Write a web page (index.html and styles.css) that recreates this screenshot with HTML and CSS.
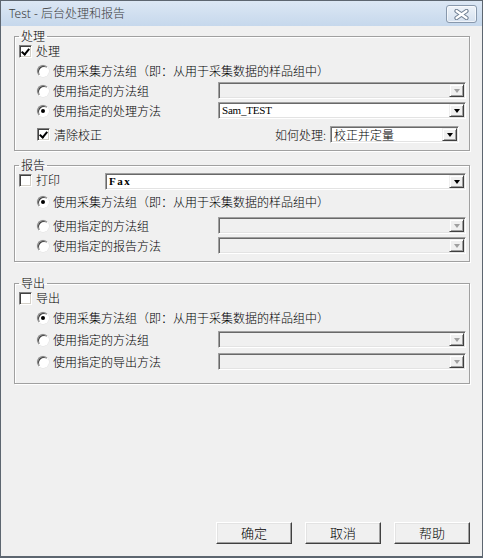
FILE: index.html
```html
<!DOCTYPE html>
<html lang="zh-CN">
<head>
    <meta charset="UTF-8">
    <title>Test - 后台处理和报告</title>
    <link rel="stylesheet" href="styles.css">
</head>
<body>

<div class="window">
    <div class="titlebar">
        <span class="title">Test - 后台处理和报告</span>
        <span class="close-btn">
            <svg width="17" height="11" viewBox="0 0 17 11">
                <path d="M3.5 2 L13.5 9 M13.5 2 L3.5 9" stroke="#6f7f92" stroke-width="4.2" stroke-linecap="round"/>
                <path d="M3.5 2 L13.5 9 M13.5 2 L3.5 9" stroke="#ffffff" stroke-width="2.2" stroke-linecap="round"/>
            </svg>
        </span>
    </div>

    <div class="client">
        <!-- 处理 -->
        <fieldset class="group group-process">
            <legend>处理</legend>
            <div class="row row-check">
                <span class="check checked"></span><span class="label">处理</span>
            </div>
            <div class="row row-radio gap-4">
                <span class="radio"></span><span class="label">使用采集方法组（即：从用于采集数据的样品组中）</span>
            </div>
            <div class="row row-radio row-combo gap-1">
                <span class="radio"></span><span class="label">使用指定的方法组</span>
                <div class="combo disabled"><span class="combo-text"></span><span class="drop"></span></div>
            </div>
            <div class="row row-radio row-combo gap-1">
                <span class="radio selected"></span><span class="label">使用指定的处理方法</span>
                <div class="combo"><span class="combo-text latin">Sam_TEST</span><span class="drop"></span></div>
            </div>
            <div class="row row-radio row-combo gap-5">
                <span class="check checked"></span><span class="label">清除校正</span>
                <span class="label how-label">如何处理:</span>
                <div class="combo combo-how"><span class="combo-text">校正并定量</span><span class="drop"></span></div>
            </div>
        </fieldset>

        <!-- 报告 -->
        <fieldset class="group group-report">
            <legend>报告</legend>
            <div class="row row-check row-print">
                <span class="check"></span><span class="label">打印</span>
                <div class="combo combo-fax"><span class="combo-text latin bold">Fax</span><span class="drop"></span></div>
            </div>
            <div class="row row-radio gap-3">
                <span class="radio selected"></span><span class="label">使用采集方法组（即：从用于采集数据的样品组中）</span>
            </div>
            <div class="row row-radio row-combo gap-5">
                <span class="radio"></span><span class="label">使用指定的方法组</span>
                <div class="combo disabled"><span class="combo-text"></span><span class="drop"></span></div>
            </div>
            <div class="row row-radio row-combo gap-1">
                <span class="radio"></span><span class="label">使用指定的报告方法</span>
                <div class="combo disabled"><span class="combo-text"></span><span class="drop"></span></div>
            </div>
        </fieldset>

        <!-- 导出 -->
        <fieldset class="group group-export">
            <legend>导出</legend>
            <div class="row row-check">
                <span class="check"></span><span class="label">导出</span>
            </div>
            <div class="row row-radio gap-4">
                <span class="radio selected"></span><span class="label">使用采集方法组（即：从用于采集数据的样品组中）</span>
            </div>
            <div class="row row-radio row-combo gap-3">
                <span class="radio"></span><span class="label">使用指定的方法组</span>
                <div class="combo disabled"><span class="combo-text"></span><span class="drop"></span></div>
            </div>
            <div class="row row-radio row-combo gap-3">
                <span class="radio"></span><span class="label">使用指定的导出方法</span>
                <div class="combo disabled"><span class="combo-text"></span><span class="drop"></span></div>
            </div>
        </fieldset>

        <div class="buttons">
            <button class="btn">确定</button>
            <button class="btn">取消</button>
            <button class="btn">帮助</button>
        </div>
    </div>
</div>

</body>
</html>
```

FILE: styles.css
```css
body {
    margin: 0;
    font-family: "Noto Sans CJK SC", "Noto Sans", sans-serif;
    font-size: 12px;
    font-weight: 300;
    color: #000;
    background-color: #f0f0f0;
}
.window {
    width: 483px;
    height: 558px;
    box-sizing: border-box;
    border: 1px solid #5d6670;
    border-bottom-width: 2px;
    background-color: #f0f0f0;
    display: flex;
    flex-direction: column;
}
.titlebar {
    height: 25px;
    flex-shrink: 0;
    background: linear-gradient(#dce7f4, #c6d8ec);
    display: flex;
    align-items: center;
    padding: 0 5px 0 8px;
}
.title {
    color: #3b3b3b;
    font-family: "Noto Sans", "Noto Sans CJK SC", sans-serif;
    font-size: 12px;
    line-height: 16px;
}
.close-btn {
    margin-left: auto;
    width: 29px;
    height: 16px;
    border: 1px solid #8898ac;
    border-radius: 3px;
    background: linear-gradient(#eef3f9, #d5e1ef);
    box-shadow: inset 0 0 0 1px rgba(255, 255, 255, 0.6);
    display: flex;
    align-items: center;
    justify-content: center;
    margin-top: 1px;
}
.client {
    flex: 1;
    display: flex;
    flex-direction: column;
    padding: 0 12px 12px 13px;
}
.group {
    margin: 0;
    min-width: 0;
    border: 1px solid #a0a0a0;
    box-shadow: 1px 1px 0 #fff, inset 1px 1px 0 #fff;
    padding: 0 3px 6px 4px;
}
.group legend {
    padding: 0 2px;
    margin-left: 0;
    line-height: 16px;
    font-size: 12px;
}
.group-process {
    margin-top: 2px;
}
.group-report {
    margin-top: 6px;
}
.group-export {
    margin-top: 13px;
    padding-bottom: 12px;
}
.row {
    display: flex;
    align-items: center;
    white-space: nowrap;
    height: 18px;
    line-height: 16px;
}
.row-check {
    height: 14px;
}
.row-radio {
    padding-left: 18px;
}
.row-combo {
    height: 19px;
}
.row-print {
    height: 17px;
    align-items: flex-start;
}
.gap-1 { margin-top: 1px; }
.gap-3 { margin-top: 3px; }
.gap-4 { margin-top: 4px; }
.gap-5 { margin-top: 5px; }
.label {
    margin-left: 4px;
}
.row-print .label {
    margin-top: -1px;
}
.check {
    width: 13px;
    height: 13px;
    box-sizing: border-box;
    flex-shrink: 0;
    background-color: #fff;
    border: 1px solid;
    border-color: #808080 #fff #fff #808080;
    box-shadow: inset 1px 1px 0 #404040, inset -1px -1px 0 #d4d0c8;
    position: relative;
}
.check.checked::after {
    content: "";
    position: absolute;
    left: 3px;
    top: 1px;
    width: 3px;
    height: 6px;
    border: solid #000;
    border-width: 0 2px 2px 0;
    transform: rotate(40deg);
}
.row-print .check {
    margin-top: 1px;
}
.radio {
    width: 12px;
    height: 12px;
    box-sizing: border-box;
    flex-shrink: 0;
    border-radius: 50%;
    background-color: #fff;
    border: 1px solid;
    border-color: #808080 #fff #fff #808080;
    box-shadow: inset 1px 1px 0 #404040, 0 0 0 0.5px #e0e0e0;
    display: flex;
    align-items: center;
    justify-content: center;
}
.radio.selected::after {
    content: "";
    width: 4px;
    height: 4px;
    border-radius: 50%;
    background-color: #000;
}
.combo {
    margin-left: auto;
    width: 248px;
    height: 17px;
    box-sizing: border-box;
    flex-shrink: 0;
    background-color: #fff;
    border: 1px solid;
    border-color: #a0a0a0 #fff #fff #a0a0a0;
    box-shadow: inset 1px 1px 0 #696969, inset -1px -1px 0 #e3e3e3;
    display: flex;
    align-items: center;
    padding: 1px 1px 1px 2px;
}
.combo.disabled {
    background-color: #f0f0f0;
}
.combo-fax {
    width: 361px;
}
.combo-how {
    width: 129px;
    margin-left: 4px;
    margin-right: 7px;
}
.how-label {
    margin-left: auto;
}
.combo-text {
    flex: 1;
    line-height: 13px;
    padding-left: 1px;
}
.latin {
    font-family: "Liberation Serif", serif;
    font-size: 11px;
    font-weight: normal;
    letter-spacing: -0.2px;
}
.latin.bold {
    font-weight: bold;
    letter-spacing: 1.5px;
}
.drop {
    width: 15px;
    height: 13px;
    box-sizing: border-box;
    flex-shrink: 0;
    background-color: #f0f0f0;
    border: 1px solid;
    border-color: #f0f0f0 #404040 #404040 #f0f0f0;
    box-shadow: inset 1px 1px 0 #fff, inset -1px -1px 0 #a0a0a0;
    display: flex;
    align-items: center;
    justify-content: center;
}
.drop::after {
    content: "";
    width: 0;
    height: 0;
    border-left: 3.5px solid transparent;
    border-right: 3.5px solid transparent;
    border-top: 4px solid #000;
}
.combo.disabled .drop::after {
    border-top-color: #a0a0a0;
}
.buttons {
    margin-top: auto;
    display: flex;
    justify-content: flex-end;
    gap: 13px;
}
.btn {
    width: 76px;
    height: 22px;
    box-sizing: border-box;
    background-color: #f0f0f0;
    border: 1px solid;
    border-color: #fff #404040 #404040 #fff;
    box-shadow: inset -1px -1px 0 #a0a0a0, inset 1px 1px 0 #e3e3e3;
    font-family: "Noto Sans CJK SC", sans-serif;
    font-size: 13px;
    font-weight: 300;
    line-height: 18px;
    padding: 0;
    color: #000;
}
```
